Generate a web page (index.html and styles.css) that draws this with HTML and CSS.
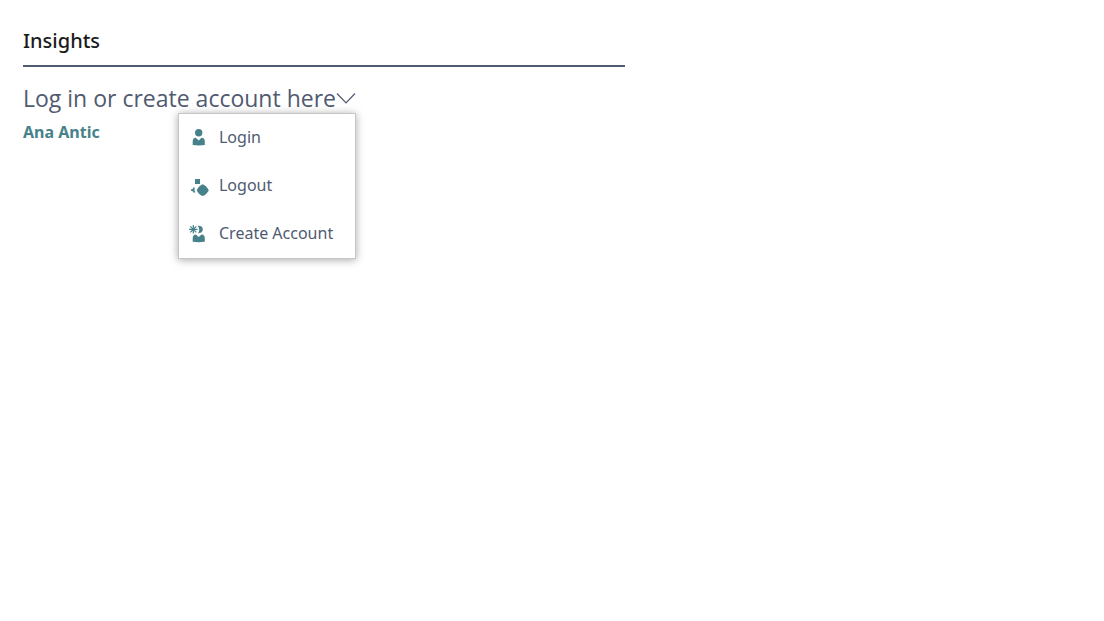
FILE: index.html
```
<!DOCTYPE html>
<html lang="en">
<head>
<meta charset="utf-8">
<meta name="viewport" content="width=device-width, initial-scale=1">
<title>Insights</title>
<link rel="stylesheet" href="styles.css">
</head>
<body>
<main class="panel">
  <h1 class="panel-title">Insights</h1>
  <div class="dropdown">
    <button class="dropdown-toggle" type="button" aria-haspopup="true" aria-expanded="true">
      <span>Log in or create account here</span>
      <svg class="chevron" viewBox="0 0 20 12" aria-hidden="true"><path d="M1 1.5 10 11 19 1.5"/></svg>
    </button>
    <div class="menu">
      <button class="menu-item" type="button">
        <svg class="menu-icon" viewBox="0 0 20 20" aria-hidden="true">
          <circle cx="9.7" cy="5.7" r="3.7"/>
          <path d="M3.7 18V14.5Q3.7 11 6.8 10.8L9.7 13.4 12.6 10.8Q15.8 11 15.8 14.5V18Q9.7 18.8 3.7 18Z"/>
        </svg>
        <span>Login</span>
      </button>
      <button class="menu-item" type="button">
        <svg class="menu-icon" viewBox="0 0 20 20" aria-hidden="true">
          <path d="M6 4H11V9H6Z"/>
          <path d="M13.7 9.2Q17.5 10.6 19.8 15.2 17.5 19.8 13.7 21 9.8 19.8 7.7 15.2 9.8 10.6 13.7 9.2Z"/>
          <path d="M5.9 12.4H4.2V13.6L2 14.4V15.8L4.2 16.4V17.6H6.4L5.4 15Z"/>
        </svg>
        <span>Logout</span>
      </button>
      <button class="menu-item" type="button">
        <svg class="menu-icon" viewBox="0 0 20 20" aria-hidden="true">
          <path class="spark" d="M4.3 2V10.6M0 6.3H8.6M1.3 3.3 7.3 9.3M7.3 3.3 1.3 9.3"/>
          <path d="M8.8 2.7Q13.8 2.4 13.8 6.4 13.6 10 9 10.2 10.4 8.4 10.2 6.4 10 4.2 8.8 2.7Z"/>
          <path d="M3.7 18.8V15.2Q3.7 11.8 6.8 11.5L9.7 14 12.6 11.5Q15.8 11.8 15.8 15.2V18.8Q9.7 19.6 3.7 18.8Z"/>
        </svg>
        <span>Create Account</span>
      </button>
    </div>
  </div>
  <p class="user-name">Ana Antic</p>
</main>
</body>
</html>
```
FILE: styles.css
```
* { box-sizing: border-box; }

body {
  min-height: 100vh;
  margin: 0;
  background: #fff;
  color: #505a70;
  font-family: "Noto Sans", "Open Sans", sans-serif;
}

.panel {
  width: 57%;
  padding: 24px 4px 24px 23px;
}

.panel-title {
  margin: 0 0 16px;
  padding-bottom: 8px;
  border-bottom: 2px solid #505a70;
  color: #1b1b1b;
  font-size: 20px;
  font-weight: 500;
  line-height: 33px;
}

.dropdown {
  position: relative;
  width: fit-content;
}

.dropdown-toggle {
  display: flex;
  align-items: center;
  padding: 0;
  border: 0;
  background: none;
  color: inherit;
  font: 400 23px/30px "Open Sans", "Noto Sans", sans-serif;
  white-space: nowrap;
}

.chevron {
  width: 20px;
  height: 12px;
  fill: none;
  stroke: #505a70;
  stroke-width: 1.2;
}

.menu {
  position: absolute;
  top: 100%;
  right: 0;
  width: 178px;
  border: 1px solid #c6c6c6;
  background: #fff;
  box-shadow: 0 1px 8px rgba(0, 0, 0, 0.35);
}

.menu-item {
  display: flex;
  align-items: center;
  gap: 10px;
  width: 100%;
  height: 48px;
  padding: 0 10px 2px;
  border: 0;
  background: none;
  color: inherit;
  font: 400 16px/24px "Noto Sans", "Open Sans", sans-serif;
  white-space: nowrap;
}

.menu-icon {
  width: 20px;
  height: 20px;
  fill: #47828a;
  overflow: visible;
}

.spark {
  stroke: #47828a;
  stroke-width: 1.2;
}

.user-name {
  margin: 7px 0 0;
  color: #47828a;
  font-size: 16px;
  font-weight: 700;
  line-height: 24px;
}
```
